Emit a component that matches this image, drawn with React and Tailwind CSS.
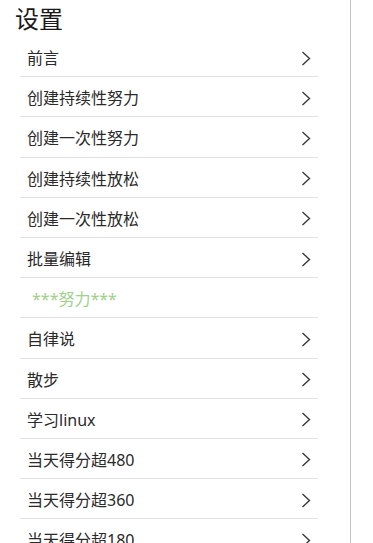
import React from "react";

const items = [
  "前言",
  "创建持续性努力",
  "创建一次性努力",
  "创建持续性放松",
  "创建一次性放松",
  "批量编辑",
  { header: "***努力***" },
  "自律说",
  "散步",
  "学习linux",
  "当天得分超480",
  "当天得分超360",
  "当天得分超180",
];

function Chevron() {
  return (
    <svg width="10" height="15" viewBox="0 0 10 15" className="shrink-0">
      <polyline points="1.5,1 8.5,7.5 1.5,14" fill="none" stroke="#3a3a3a" strokeWidth="1.4" strokeLinejoin="miter" />
    </svg>
  );
}

export default function App() {
  return (
    <div
      className="w-[373px] h-[543px] overflow-hidden bg-white flex"
      style={{ fontFamily: '"Noto Sans", "Noto Sans CJK SC", sans-serif' }}
    >
      <div className="w-[351px] shrink-0 border-r border-[#c4c4c4] flex flex-col">
        <div className="h-[37px] shrink-0 pl-[15px] flex items-center text-[24px] leading-none text-[#1a1a1a]">
          设置
        </div>
        <div className="flex flex-col">
          {items.map((it, i) =>
            typeof it === "string" ? (
              <div
                key={i}
                className="ml-[20px] w-[298px] h-[40.2px] shrink-0 border-b border-[#e2e2e2] flex items-center justify-between pl-[7px] pr-[7px] pt-[3px]"
              >
                <span className="text-[16px] leading-none text-[#2a2a2a]">{it}</span>
                <Chevron />
              </div>
            ) : (
              <div
                key={i}
                className="ml-[20px] w-[298px] h-[40.2px] shrink-0 border-b border-[#e2e2e2] flex items-center pl-[12px] pt-[3px]"
              >
                <span className="text-[16px] leading-none text-[#9fd08c]">{it.header}</span>
              </div>
            )
          )}
        </div>
      </div>
    </div>
  );
}
